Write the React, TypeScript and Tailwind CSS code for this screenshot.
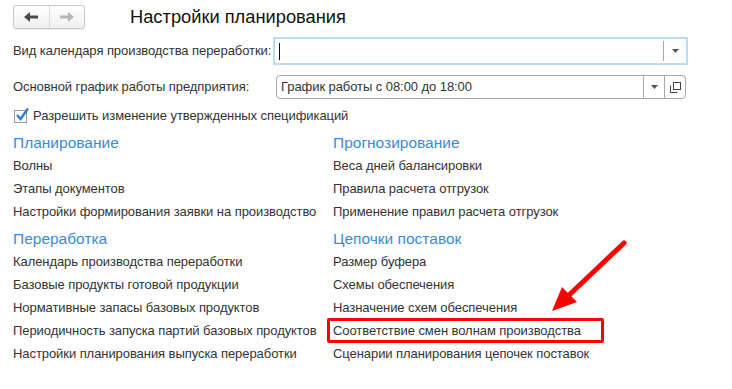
import React from 'react';

const left = {
  title: 'Планирование',
  items: ['Волны', 'Этапы документов', 'Настройки формирования заявки на производство'],
};
const left2 = {
  title: 'Переработка',
  items: [
    'Календарь производства переработки',
    'Базовые продукты готовой продукции',
    'Нормативные запасы базовых продуктов',
    'Периодичность запуска партий базовых продуктов',
    'Настройки планирования выпуска переработки',
  ],
};
const right = {
  title: 'Прогнозирование',
  items: ['Веса дней балансировки', 'Правила расчета отгрузок', 'Применение правил расчета отгрузок'],
};
const right2 = {
  title: 'Цепочки поставок',
  items: [
    'Размер буфера',
    'Схемы обеспечения',
    'Назначение схем обеспечения',
    'Соответствие смен волнам производства',
    'Сценарии планирования цепочек поставок',
  ],
};

const DropArrow = () => (
  <svg width="7" height="4" viewBox="0 0 7 4">
    <path d="M0 0h7L3.5 4z" fill="#555" />
  </svg>
);

const Section = ({ title, items, first, marked }: { title: string; items: string[]; first?: boolean; marked?: string }) => (
  <div className={first ? '' : 'mt-[5px]'}>
    <div className="h-[22px] flex items-center text-[15.5px] text-[#3b8bd5] tracking-normal">{title}</div>
    {items.map((it) => (
      <div key={it} className="relative h-[23px] flex items-center whitespace-nowrap">
        <span>{it}</span>
        {marked === it && (
          <div className="absolute -left-[6px] -top-[1px] w-[277px] h-[25px] border-[3px] border-[#f00] rounded-[2px]" />
        )}
      </div>
    ))}
  </div>
);

export default function App() {
  return (
    <div
      className="relative w-[732px] h-[389px] bg-white overflow-hidden px-[13px] text-[13px] text-[#333] tracking-[-0.07px]"
      style={{ fontFamily: '"Liberation Sans", Arial, sans-serif' }}
    >
      {/* header */}
      <div className="pt-[5px] flex items-center h-[29px]">
        <div className="flex w-[72px] h-[24px] border border-[#c9c9c9] rounded-[3px] bg-gradient-to-b from-white to-[#f0f0f0] shadow-[0_1px_1px_rgba(0,0,0,0.08)]">
          <div className="flex-1 flex items-center justify-center border-r border-[#d9d9d9]">
            <svg width="14" height="10" viewBox="0 0 14 10">
              <path d="M0 5L6 0v3.5h8v3H6V10z" fill="#4a4a4a" />
            </svg>
          </div>
          <div className="flex-1 flex items-center justify-center">
            <svg width="14" height="10" viewBox="0 0 14 10">
              <path d="M14 5L8 0v3.5H0v3h8V10z" fill="#b5b5b5" />
            </svg>
          </div>
        </div>
        <div className="ml-[45px] text-[18.3px] text-[#111] tracking-normal">Настройки планирования</div>
      </div>

      {/* row 1 */}
      <div className="mt-[8px] flex items-center h-[28px]">
        <div className="w-[260px] whitespace-nowrap">Вид календаря производства переработки:</div>
        <div className="w-[415px] h-[28px] border-[2px] border-[#bcdcf6] flex items-center">
          <div className="flex-1 h-full flex items-center pl-[4px]">
            <div className="w-px h-[17px] bg-[#111]" />
          </div>
          <div className="w-px h-[20px] bg-[#a8a8a8]" />
          <div className="w-[22px] flex items-center justify-center">
            <DropArrow />
          </div>
        </div>
      </div>

      {/* row 2 */}
      <div className="mt-[10px] flex items-center h-[24px]">
        <div className="w-[263px] whitespace-nowrap">Основной график работы предприятия:</div>
        <div className="w-[410px] h-[24px] border border-[#a8a8a8] rounded-[4px] flex items-stretch">
          <div className="flex-1 flex items-center pl-[4px] whitespace-nowrap">График работы с 08:00 до 18:00</div>
          <div className="w-[21px] border-l border-[#a8a8a8] flex items-center justify-center">
            <DropArrow />
          </div>
          <div className="w-[21px] border-l border-[#a8a8a8] flex items-center justify-center">
            <svg width="11" height="11" viewBox="0 0 11 11">
              <rect x="3.5" y="0.5" width="7" height="7" fill="none" stroke="#444" />
              <path d="M0.5 3.5v7h7" fill="none" stroke="#444" />
            </svg>
          </div>
        </div>
      </div>

      {/* checkbox */}
      <div className="mt-[6px] flex items-center h-[22px]">
        <div className="relative w-[13px] h-[13px] ml-[1px] border border-[#9a9a9a] bg-white">
          <svg className="absolute -top-[4px] left-[0px]" width="15" height="15" viewBox="0 0 15 15">
            <path d="M2 8l3.5 4L13 1.5" fill="none" stroke="#2f7fcf" strokeWidth="2.4" />
          </svg>
        </div>
        <span className="ml-[6px] whitespace-nowrap">Разрешить изменение утвержденных спецификаций</span>
      </div>

      {/* sections */}
      <div className="mt-[5px] grid grid-cols-[320px_1fr]">
        <div>
          <Section {...left} first />
          <Section {...left2} />
        </div>
        <div>
          <Section {...right} first />
          <Section {...right2} marked="Соответствие смен волнам производства" />
        </div>
      </div>

      {/* annotation arrow */}
      <svg className="absolute left-0 top-0 pointer-events-none" width="732" height="389">
        <line x1="624" y1="243" x2="567" y2="297" stroke="#f00" strokeWidth="5" strokeLinecap="round" />
        <path d="M552 311L577 302L562 287z" fill="#f00" />
      </svg>
    </div>
  );
}
